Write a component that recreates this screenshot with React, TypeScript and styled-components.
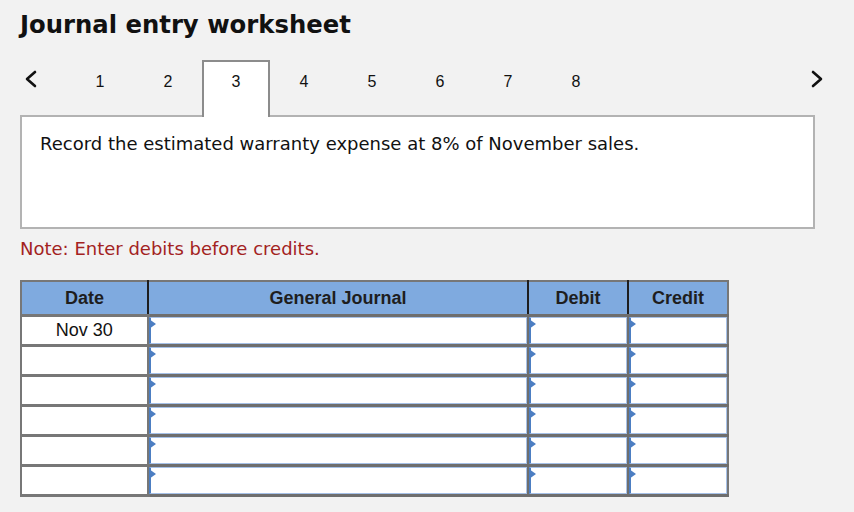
import styled, { createGlobalStyle } from "styled-components";

const GlobalStyle = createGlobalStyle`
    html, body {
        margin: 0;
        padding: 0;
        background: #f2f2f2;
    }
`;

const Page = styled.div`
    width: 854px;
    height: 512px;
    padding: 10px 20px 0 20px;
    box-sizing: border-box;
    background: #f2f2f2;
    overflow: hidden;
`;

const Title = styled.h1`
    margin: 0;
    font-family: "DejaVu Sans", Verdana, sans-serif;
    font-weight: bold;
    font-size: 24.3px;
    line-height: 30px;
    color: #111;
`;

const TabBar = styled.div`
    display: flex;
    align-items: stretch;
    height: 55px;
    margin-top: 20px;
    width: 814px;
`;

const Arrow = styled.button`
    border: none;
    background: none;
    padding: 0;
    width: 46px;
    display: flex;
    align-items: flex-start;
    padding-top: 10px;
    padding-left: 4px;
    cursor: pointer;
`;

const NextArrow = styled(Arrow)`
    margin-left: auto;
    justify-content: flex-end;
    padding-left: 0;
    padding-right: 10px;
`;

const Tab = styled.div<{ $active?: boolean }>`
    width: 68px;
    box-sizing: border-box;
    border: 2px solid ${(p) => (p.$active ? "#8c8c8c" : "transparent")};
    border-bottom: none;
    background: ${(p) => (p.$active ? "#fff" : "transparent")};
    display: flex;
    justify-content: center;
    padding-top: 11px;
    font-family: "Liberation Sans", Arial, sans-serif;
    font-size: 16px;
    color: #111;
    margin-bottom: ${(p) => (p.$active ? "-2px" : "0")};
    position: relative;
    z-index: 1;
`;

const Prompt = styled.div`
    width: 795px;
    height: 114px;
    box-sizing: border-box;
    border: 2px solid #b3b3b3;
    background: #fff;
    padding: 15px 18px;
    font-family: "DejaVu Sans", Verdana, sans-serif;
    font-size: 18px;
    line-height: 24px;
    color: #111;
`;

const Note = styled.p`
    margin: 9px 0 0 0;
    font-family: "DejaVu Sans", Verdana, sans-serif;
    font-size: 18px;
    line-height: 22px;
    color: #a3231f;
`;

const Table = styled.table`
    margin-top: 20px;
    border-collapse: collapse;
    border: 2px solid #777;
    background: #fff;
    table-layout: fixed;
    width: 707px;
`;

const Head = styled.th<{ $w: number }>`
    width: ${(p) => p.$w}px;
    height: 32px;
    padding: 0;
    background: #7faadf;
    border: 2px solid #1e1e1e;
    border-top: none;
    font-family: "Liberation Sans", Arial, sans-serif;
    font-size: 18px;
    font-weight: bold;
    color: #1e1e1e;
    &:first-child {
        border-left: none;
    }
    &:last-child {
        border-right: none;
    }
`;

const DateCell = styled.td`
    height: 27px;
    padding: 0;
    border: 3px solid #777;
    border-left: none;
    text-align: center;
    font-family: "Liberation Sans", Arial, sans-serif;
    font-size: 18px;
    color: #111;
`;

const EntryCell = styled.td`
    height: 27px;
    padding: 0;
    border: 3px solid #6e6e6e;
    &:last-child {
        border-right: none;
    }
`;

const EntryBox = styled.div`
    position: relative;
    height: 27px;
    box-sizing: border-box;
    margin-left: -1px;
    background: #fff;
    border: 1px solid #a6c1e8;
    border-left: 2px solid #4c7ec2;
`;

const Flag = styled.span`
    position: absolute;
    left: -2px;
    top: 1px;
    width: 0;
    height: 0;
    border-top: 5px solid transparent;
    border-bottom: 5px solid transparent;
    border-left: 7px solid #4c7ec2;
`;

const Chevron = ({ dir }: { dir: "left" | "right" }) => (
    <svg width="14" height="18" viewBox="0 0 14 18">
        <path
            d={dir === "left" ? "M11 2 L3 9 L11 16" : "M3 2 L11 9 L3 16"}
            fill="none"
            stroke="#111"
            strokeWidth="2.6"
            strokeLinecap="round"
            strokeLinejoin="round"
        />
    </svg>
);

const dates = ["Nov 30", "", "", "", "", ""];

export default function App() {
    return (
        <Page>
            <GlobalStyle />
            <Title>Journal entry worksheet</Title>
            <TabBar>
                <Arrow aria-label="previous">
                    <Chevron dir="left" />
                </Arrow>
                {[1, 2, 3, 4, 5, 6, 7, 8].map((n) => (
                    <Tab key={n} $active={n === 3}>
                        {n}
                    </Tab>
                ))}
                <NextArrow aria-label="next">
                    <Chevron dir="right" />
                </NextArrow>
            </TabBar>
            <Prompt>Record the estimated warranty expense at 8% of November sales.</Prompt>
            <Note>Note: Enter debits before credits.</Note>
            <Table>
                <thead>
                    <tr>
                        <Head $w={125}>Date</Head>
                        <Head $w={378}>General Journal</Head>
                        <Head $w={98}>Debit</Head>
                        <Head $w={98}>Credit</Head>
                    </tr>
                </thead>
                <tbody>
                    {dates.map((d, i) => (
                        <tr key={i}>
                            <DateCell>{d}</DateCell>
                            {[0, 1, 2].map((c) => (
                                <EntryCell key={c}>
                                    <EntryBox>
                                        <Flag />
                                    </EntryBox>
                                </EntryCell>
                            ))}
                        </tr>
                    ))}
                </tbody>
            </Table>
        </Page>
    );
}
